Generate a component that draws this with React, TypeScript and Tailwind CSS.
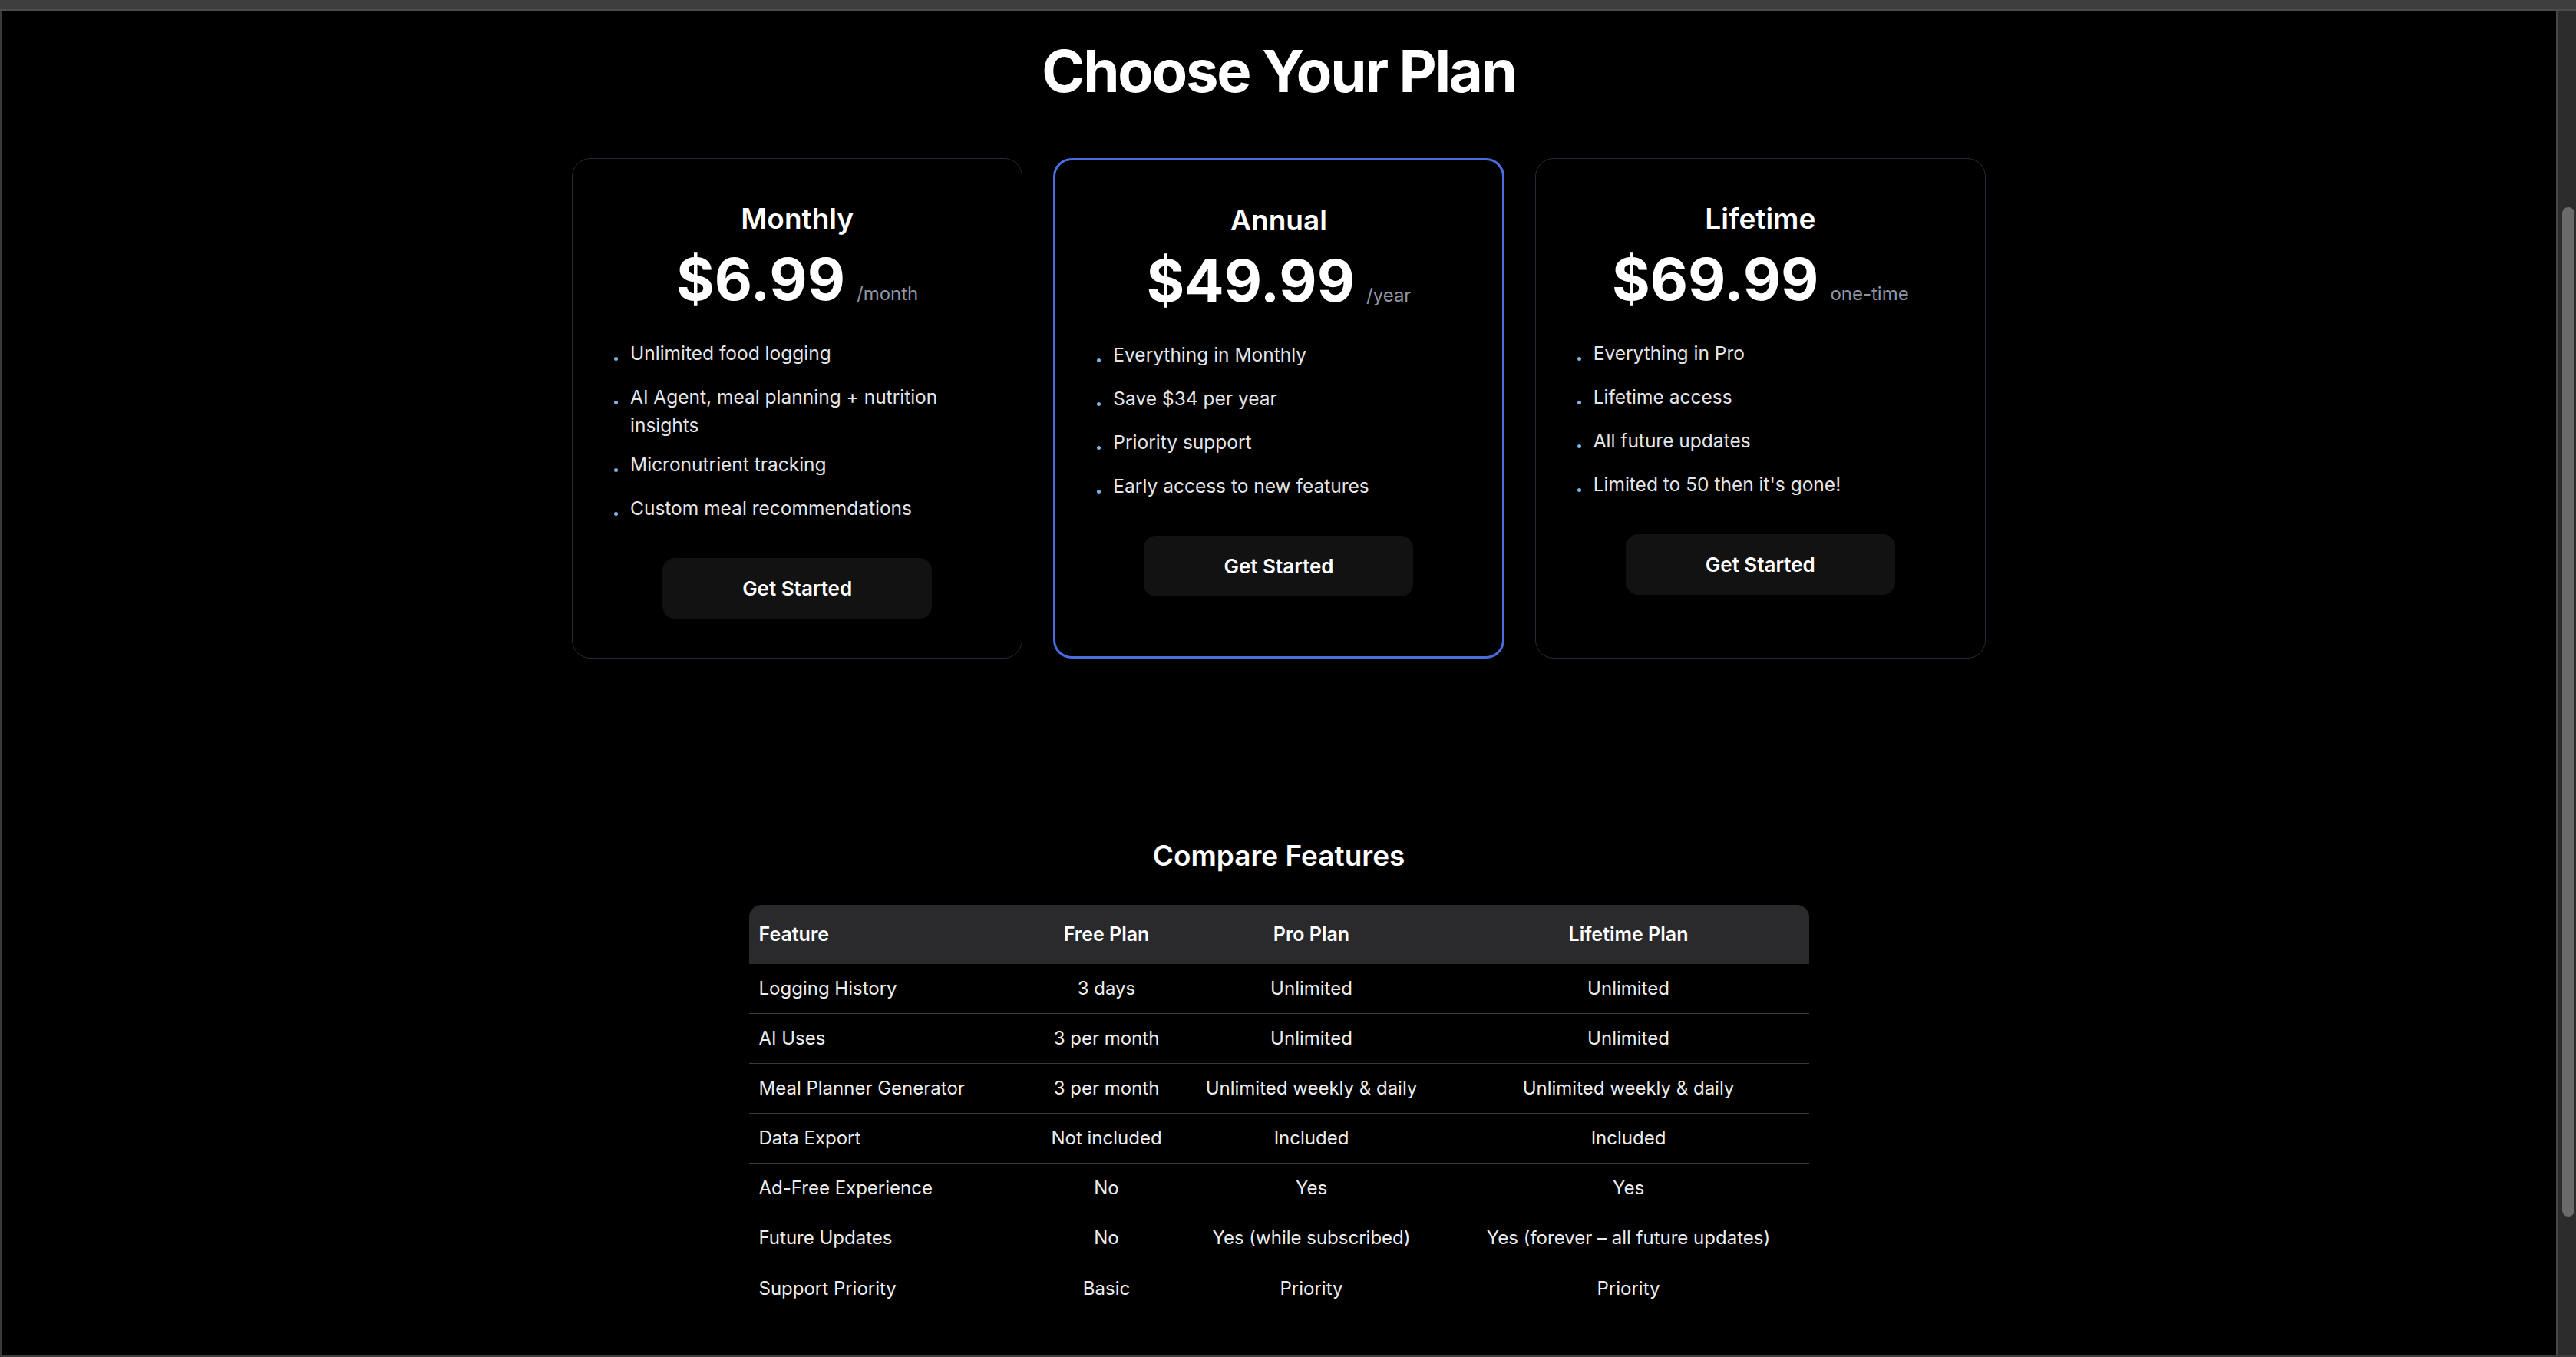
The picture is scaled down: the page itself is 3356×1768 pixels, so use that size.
import React from 'react';

interface Plan {
  name: string;
  price: string;
  period: string;
  features: string[];
  highlighted?: boolean;
}

const plans: Plan[] = [
  {
    name: 'Monthly',
    price: '$6.99',
    period: '/month',
    features: [
      'Unlimited food logging',
      'AI Agent, meal planning + nutrition insights',
      'Micronutrient tracking',
      'Custom meal recommendations',
    ],
  },
  {
    name: 'Annual',
    price: '$49.99',
    period: '/year',
    highlighted: true,
    features: ['Everything in Monthly', 'Save $34 per year', 'Priority support', 'Early access to new features'],
  },
  {
    name: 'Lifetime',
    price: '$69.99',
    period: 'one-time',
    features: ['Everything in Pro', 'Lifetime access', 'All future updates', "Limited to 50 then it's gone!"],
  },
];

const rows: string[][] = [
  ['Logging History', '3 days', 'Unlimited', 'Unlimited'],
  ['AI Uses', '3 per month', 'Unlimited', 'Unlimited'],
  ['Meal Planner Generator', '3 per month', 'Unlimited weekly & daily', 'Unlimited weekly & daily'],
  ['Data Export', 'Not included', 'Included', 'Included'],
  ['Ad-Free Experience', 'No', 'Yes', 'Yes'],
  ['Future Updates', 'No', 'Yes (while subscribed)', 'Yes (forever – all future updates)'],
  ['Support Priority', 'Basic', 'Priority', 'Priority'],
];

const PlanCard: React.FC<{ plan: Plan }> = ({ plan }) => (
  <div
    className={`flex flex-col items-center rounded-[24px] px-[48px] pt-[53px] pb-[51px] ${
      plan.highlighted ? 'border-[3px] border-[#4a6ee0]' : 'border border-[#252a37]'
    }`}
  >
    <h3 className="text-[37px] leading-[50px] font-semibold text-white">{plan.name}</h3>
    <div className="mt-[15px] flex items-baseline justify-center">
      <span className="text-[76px] leading-[76px] font-bold text-white">{plan.price}</span>
      <span className="ml-[15px] text-[24px] leading-[34px] text-[#8f96a3]">{plan.period}</span>
    </div>
    <ul className="mt-[41px] self-stretch pl-[6px] flex flex-col gap-[14px]">
      {plan.features.map((f) => (
        <li key={f} className="flex items-start gap-[16px]">
          <div className="h-[43px] w-[5px] shrink-0 pt-[23px]">
            <div className="w-[5px] h-[5px] rounded-full bg-[#7fb4e2]" />
          </div>
          <span className="text-[24.5px] leading-[37px] text-[#e4e4e7]">{f}</span>
        </li>
      ))}
    </ul>
    <button className="mt-[40px] w-[351px] h-[79px] shrink-0 rounded-[16px] bg-[#121212] text-white text-[26px] font-semibold">
      Get Started
    </button>
  </div>
);

const cols = 'grid grid-cols-[377px_178px_356px_470px] items-center';

export default function App() {
  return (
    <div className="w-[3356px] h-[1768px] bg-black flex flex-col overflow-hidden font-['Inter',sans-serif]">
      <div className="h-[12px] shrink-0 bg-[#3e3e3e]" />
      <div className="h-[2px] shrink-0 bg-[#4c4c4c]" />
      <div className="flex flex-1 min-h-0">
        <div className="w-[2px] bg-[#3a3a3a]" />
        <main className="flex-1 flex flex-col items-center">
          <h1 className="mt-[40px] text-[76px] leading-[76px] font-bold text-white tracking-[-0.03em]">Choose Your Plan</h1>

          <div className="mt-[76px] w-[1842px] grid grid-cols-3 gap-[40px]">
            {plans.map((p) => (
              <PlanCard key={p.name} plan={p} />
            ))}
          </div>

          <h2 className="mt-[232px] text-[37px] leading-[50px] font-semibold text-white">Compare Features</h2>

          <div className="mt-[39px] w-[1381px]">
            <div className={`${cols} h-[77px] rounded-t-[16px] bg-[#2a2a2c] text-[25px] font-semibold text-white`}>
              <div className="pl-[13px]">Feature</div>
              <div className="text-center">Free Plan</div>
              <div className="text-center">Pro Plan</div>
              <div className="text-center">Lifetime Plan</div>
            </div>
            {rows.map((r, i) => (
              <div
                key={r[0]}
                className={`${cols} h-[65px] text-[24px] text-[#ececec] ${i < rows.length - 1 ? 'border-b border-[#3a3a3c]' : ''}`}
              >
                <div className="pl-[13px]">{r[0]}</div>
                <div className="text-center">{r[1]}</div>
                <div className="text-center">{r[2]}</div>
                <div className="text-center">{r[3]}</div>
              </div>
            ))}
          </div>
        </main>
        <div className="w-[2px] bg-[#484848]" />
        <div className="w-[24px] bg-[#2c2c2c] pt-[256px] pl-[6px]">
          <div className="w-[16px] h-[1315px] rounded-full bg-[#6b6b6b]" />
        </div>
      </div>
      <div className="h-[3px] shrink-0 bg-[#3c3c3c]" />
    </div>
  );
}
